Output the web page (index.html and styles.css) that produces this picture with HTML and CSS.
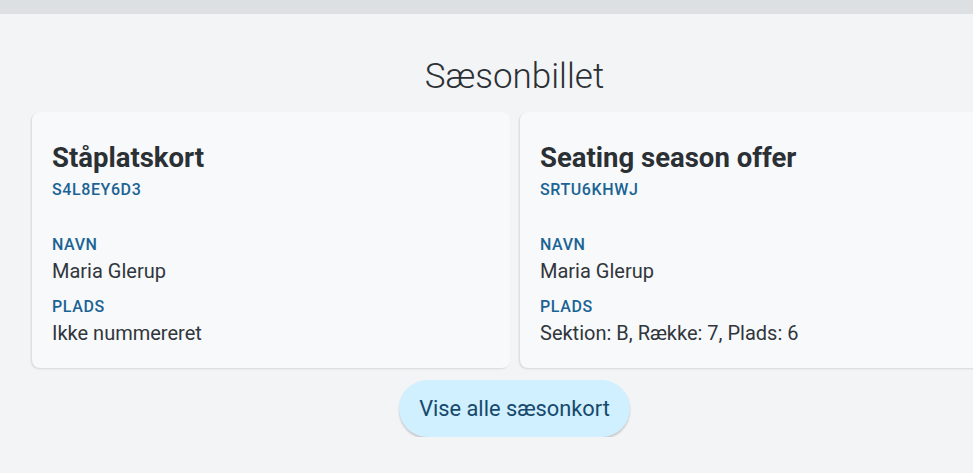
FILE: index.html
```html
<!DOCTYPE html>
<html lang="da">
<head>
<meta charset="utf-8">
<link rel="stylesheet" href="styles.css">
</head>
<body>
<div class="topbar"></div>
<main class="section">
  <h1 class="section-title">Sæsonbillet</h1>
  <div class="cards">
    <article class="card">
      <h2 class="card-title">Ståplatskort</h2>
      <div class="card-code">S4L8EY6D3</div>
      <div class="field">
        <div class="field-label">NAVN</div>
        <div class="field-value">Maria Glerup</div>
      </div>
      <div class="field">
        <div class="field-label">PLADS</div>
        <div class="field-value">Ikke nummereret</div>
      </div>
    </article>
    <article class="card">
      <h2 class="card-title">Seating season offer</h2>
      <div class="card-code">SRTU6KHWJ</div>
      <div class="field">
        <div class="field-label">NAVN</div>
        <div class="field-value">Maria Glerup</div>
      </div>
      <div class="field">
        <div class="field-label">PLADS</div>
        <div class="field-value">Sektion: B, Række: 7, Plads: 6</div>
      </div>
    </article>
  </div>
  <div class="actions">
    <button class="btn-all">Vise alle sæsonkort</button>
  </div>
</main>
</body>
</html>
```

FILE: styles.css
```css
html, body {
  margin: 0;
  padding: 0;
  background: #f3f4f6;
  font-family: Roboto, "Noto Sans", sans-serif;
  overflow: hidden;
}

.topbar {
  height: 14px;
  background: #dce0e3;
}

.section {
  margin-left: 32px;
  width: 965px;
  display: flex;
  flex-direction: column;
}

.section-title {
  margin: 40px 0 0;
  font-size: 35px;
  font-weight: 300;
  line-height: 46px;
  color: #2b3035;
  text-align: center;
}

.cards {
  margin-top: 12px;
  display: flex;
  gap: 10px;
}

.card {
  flex: 0 0 478px;
  box-sizing: border-box;
  height: 256px;
  padding: 30px 20px 0;
  background: #f8f9fb;
  border-radius: 8px;
  box-shadow: -1px 1px 2px rgba(0, 0, 0, 0.12);
}

.card-title {
  margin: 0;
  font-size: 27.5px;
  font-weight: 700;
  line-height: 32px;
  color: #2b3035;
}

.card-code {
  margin-top: 5px;
  font-size: 16px;
  font-weight: 500;
  line-height: 22px;
  color: #1a6394;
  letter-spacing: 0.6px;
}

.field {
  margin-top: 33px;
}

.field + .field {
  margin-top: 11px;
}

.field-label {
  font-size: 16px;
  font-weight: 500;
  line-height: 22px;
  color: #1a6394;
  letter-spacing: 0.6px;
}

.field-value {
  margin-top: 2px;
  font-size: 20px;
  line-height: 27px;
  color: #30363b;
}

.actions {
  display: flex;
  justify-content: center;
  margin-top: 12px;
}

.btn-all {
  height: 57px;
  padding: 0 20px;
  border: none;
  border-radius: 29px;
  background: #d0efff;
  color: #16496b;
  font-family: Roboto, "Noto Sans", sans-serif;
  font-size: 21.8px;
  box-shadow: 0 2px 2px rgba(0, 0, 0, 0.18);
}
```
